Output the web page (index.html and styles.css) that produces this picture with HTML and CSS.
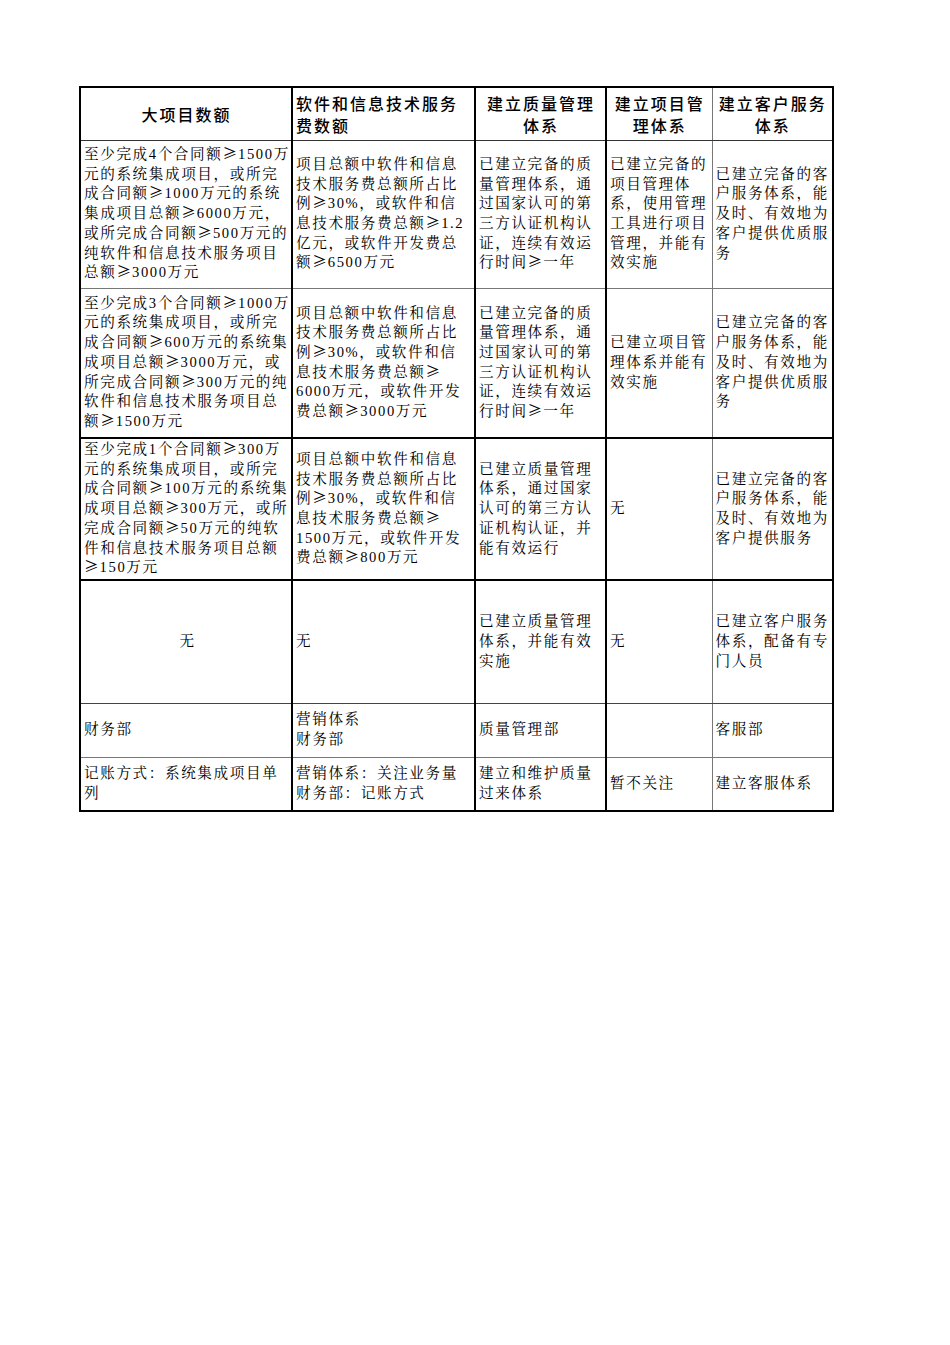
FILE: index.html
```html
<!DOCTYPE html>
<html lang="zh-CN">
<head>
<meta charset="utf-8">
<title>资质标准对照表</title>
<link rel="stylesheet" href="styles.css">
</head>
<body>
<div class="page">
<table class="sheet">
  <colgroup>
    <col class="c1"><col class="c2"><col class="c3"><col class="c4"><col class="c5">
  </colgroup>
  <tr class="r-head">
    <th class="center">大项目数额</th>
    <th class="left">软件和信息技术服务<br>费数额</th>
    <th class="center">建立质量管理<br>体系</th>
    <th class="center">建立项目管<br>理体系</th>
    <th class="center">建立客户服务<br>体系</th>
  </tr>
  <tr class="r1">
    <td>至少完成4个合同额<span class="ge">≥</span>1500万<br>元的系统集成项目，或所完<br>成合同额<span class="ge">≥</span>1000万元的系统<br>集成项目总额<span class="ge">≥</span>6000万元，<br>或所完成合同额<span class="ge">≥</span>500万元的<br>纯软件和信息技术服务项目<br>总额<span class="ge">≥</span>3000万元</td>
    <td>项目总额中软件和信息<br>技术服务费总额所占比<br>例<span class="ge">≥</span>30%，或软件和信<br>息技术服务费总额<span class="ge">≥</span>1.2<br>亿元，或软件开发费总<br>额<span class="ge">≥</span>6500万元</td>
    <td>已建立完备的质<br>量管理体系，通<br>过国家认可的第<br>三方认证机构认<br>证，连续有效运<br>行时间<span class="ge">≥</span>一年</td>
    <td>已建立完备的<br>项目管理体<br>系，使用管理<br>工具进行项目<br>管理，并能有<br>效实施</td>
    <td>已建立完备的客<br>户服务体系，能<br>及时、有效地为<br>客户提供优质服<br>务</td>
  </tr>
  <tr class="r2">
    <td>至少完成3个合同额<span class="ge">≥</span>1000万<br>元的系统集成项目，或所完<br>成合同额<span class="ge">≥</span>600万元的系统集<br>成项目总额<span class="ge">≥</span>3000万元，或<br>所完成合同额<span class="ge">≥</span>300万元的纯<br>软件和信息技术服务项目总<br>额<span class="ge">≥</span>1500万元</td>
    <td>项目总额中软件和信息<br>技术服务费总额所占比<br>例<span class="ge">≥</span>30%，或软件和信<br>息技术服务费总额<span class="ge">≥</span><br>6000万元，或软件开发<br>费总额<span class="ge">≥</span>3000万元</td>
    <td>已建立完备的质<br>量管理体系，通<br>过国家认可的第<br>三方认证机构认<br>证，连续有效运<br>行时间<span class="ge">≥</span>一年</td>
    <td>已建立项目管<br>理体系并能有<br>效实施</td>
    <td>已建立完备的客<br>户服务体系，能<br>及时、有效地为<br>客户提供优质服<br>务</td>
  </tr>
  <tr class="r3">
    <td>至少完成1个合同额<span class="ge">≥</span>300万<br>元的系统集成项目，或所完<br>成合同额<span class="ge">≥</span>100万元的系统集<br>成项目总额<span class="ge">≥</span>300万元，或所<br>完成合同额<span class="ge">≥</span>50万元的纯软<br>件和信息技术服务项目总额<br><span class="ge">≥</span>150万元</td>
    <td>项目总额中软件和信息<br>技术服务费总额所占比<br>例<span class="ge">≥</span>30%，或软件和信<br>息技术服务费总额<span class="ge">≥</span><br>1500万元，或软件开发<br>费总额<span class="ge">≥</span>800万元</td>
    <td>已建立质量管理<br>体系，通过国家<br>认可的第三方认<br>证机构认证，并<br>能有效运行</td>
    <td>无</td>
    <td>已建立完备的客<br>户服务体系，能<br>及时、有效地为<br>客户提供服务</td>
  </tr>
  <tr class="r4">
    <td class="center">无</td>
    <td>无</td>
    <td>已建立质量管理<br>体系，并能有效<br>实施</td>
    <td>无</td>
    <td>已建立客户服务<br>体系，配备有专<br>门人员</td>
  </tr>
  <tr class="r5">
    <td>财务部</td>
    <td>营销体系<br>财务部</td>
    <td>质量管理部</td>
    <td></td>
    <td>客服部</td>
  </tr>
  <tr class="r6">
    <td>记账方式：系统集成项目单<br>列</td>
    <td>营销体系：关注业务量<br>财务部：记账方式</td>
    <td>建立和维护质量<br>过来体系</td>
    <td>暂不关注</td>
    <td>建立客服体系</td>
  </tr>
</table>
</div>
</body>
</html>
```

FILE: styles.css
```css
html, body {
  margin: 0;
  padding: 0;
  background: #ffffff;
}

.page {
  padding: 86px 0 0 79px;
}

.sheet {
  border-collapse: collapse;
  table-layout: fixed;
  width: 753px;
  border: 2px solid #000;
  color: #000;
}

.c1 { width: 212px; }
.c2 { width: 183px; }
.c3 { width: 131px; }
.c4 { width: 106px; }
.c5 { width: 121px; }

.sheet th,
.sheet td {
  border-left: 2px solid #000;
  border-right: 2px solid #000;
  vertical-align: middle;
  white-space: nowrap;
  overflow: visible;
}

.sheet th:nth-child(4),
.sheet td:nth-child(4) {
  border-right: 1px solid #777;
}

.sheet th:nth-child(5),
.sheet td:nth-child(5) {
  border-left: 1px solid #777;
}

.sheet th {
  font-family: "Noto Sans CJK SC", "Liberation Sans", sans-serif;
  font-weight: 500;
  font-size: 16px;
  letter-spacing: 2px;
  line-height: 22px;
  padding: 0 2px 0 3px;
  border-bottom: 1px solid #333;
}

.sheet td {
  font-family: "Liberation Serif", "Noto Serif CJK SC", "Noto Sans CJK SC", serif;
  font-size: 14.6px;
  letter-spacing: 1.6px;
  line-height: 19.7px;
  padding: 0 0 0 3px;
  text-align: left;
  border-bottom: 1px solid #777;
}

.sheet .ge {
  font-family: "Noto Sans CJK SC", sans-serif;
  letter-spacing: 0;
  margin-right: 1px;
  line-height: 0;
}

.sheet .center { text-align: center; }
.sheet .left { text-align: left; }

.r-head { height: 53px; }
.r1 { height: 148px; }
.r2 { height: 150px; }
.r3 { height: 142px; }
.r4 { height: 123px; }
.r5 { height: 54px; }
.r6 { height: 54px; }

.r2 td,
.r3 td {
  border-bottom: 2px solid #000;
}

.r4 td {
  border-bottom: 1px solid #444;
}

.r6 td {
  border-bottom: 2px solid #000;
}
```
